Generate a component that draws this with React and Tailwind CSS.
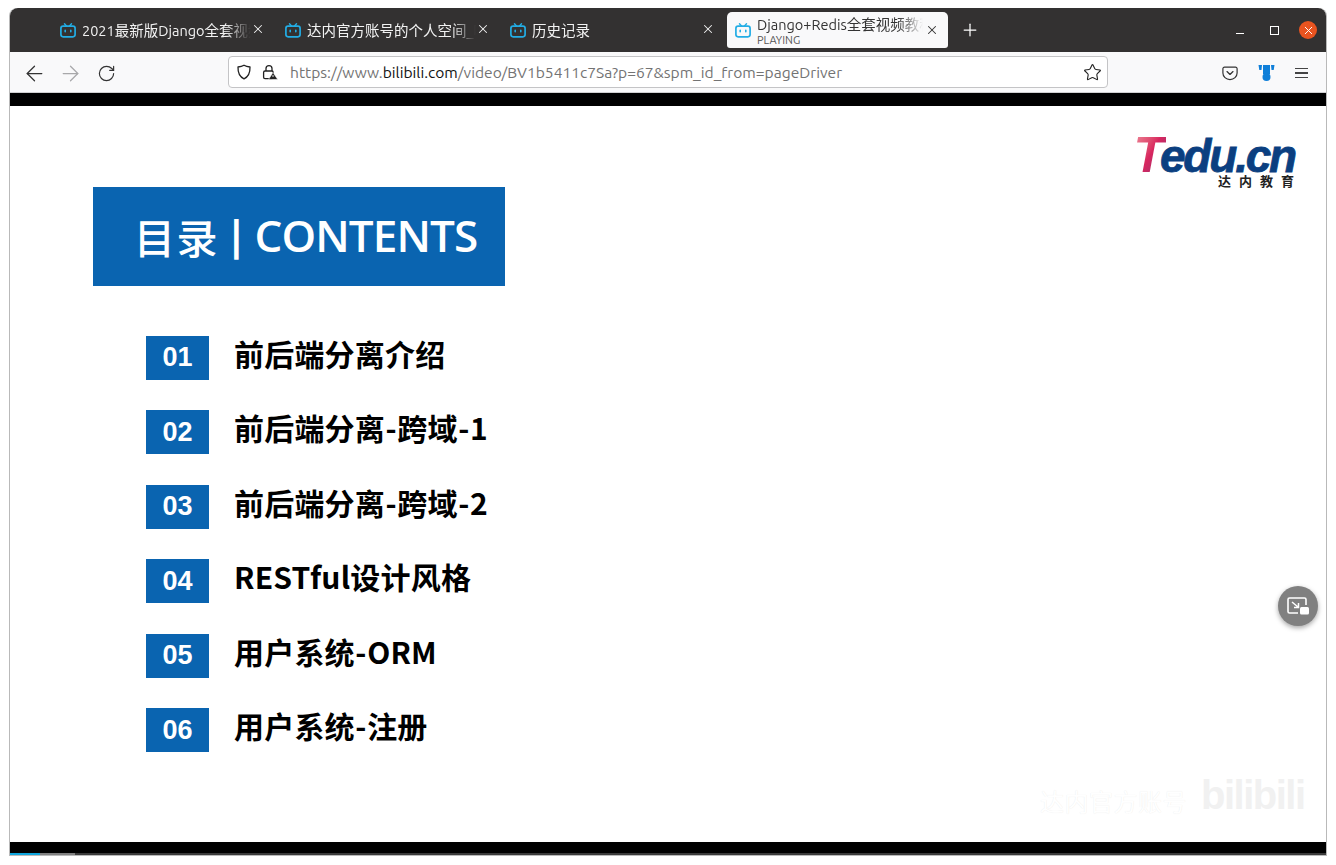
import React from 'react';
import { ArrowLeft, ArrowRight, RotateCw, Star, Plus, X } from 'lucide-react';

const CJK = "font-['Ubuntu','Noto_Sans','Noto_Sans_CJK_SC',sans-serif]";

const BiliIcon = () => (
  <svg width="16" height="15" viewBox="0 0 16 15" fill="none" className="shrink-0">
    <path d="M4.5 0.8 L6.5 3 M11.5 0.8 L9.5 3" stroke="#23ade5" strokeWidth="1.4" strokeLinecap="round" />
    <rect x="0.9" y="3.2" width="14.2" height="10.6" rx="2.2" stroke="#23ade5" strokeWidth="1.7" />
    <path d="M5.2 7.2v1.6M10.8 7.2v1.6" stroke="#23ade5" strokeWidth="1.6" strokeLinecap="round" />
  </svg>
);

const tabs = [
  { title: '2021最新版Django全套视频教程', width: 'w-[225px]' },
  { title: '达内官方账号的个人空间_哔哩哔哩', width: 'w-[225px]' },
  { title: '历史记录', width: 'w-[225px]' },
];

const items = [
  { num: '01', label: '前后端分离介绍' },
  { num: '02', label: '前后端分离-跨域-1' },
  { num: '03', label: '前后端分离-跨域-2' },
  { num: '04', label: 'RESTful设计风格' },
  { num: '05', label: '用户系统-ORM' },
  { num: '06', label: '用户系统-注册' },
];

const TitleBar = () => (
  <div className={`flex h-[44px] items-stretch rounded-t-[8px] bg-[#333131] pl-[38px] ${CJK}`}>
    {tabs.map((tab) => (
      <div key={tab.title} className={`flex ${tab.width} items-center pl-[12px]`}>
        <BiliIcon />
        <span className="ml-[6px] w-[169px] overflow-hidden whitespace-nowrap pt-[2px] text-[14.5px] text-[#f2f2f2] [mask-image:linear-gradient(to_right,black_85%,transparent)]">
          {tab.title}
        </span>
        <X size={14} strokeWidth={1.8} className="-translate-y-px text-[#f2f2f2]" />
      </div>
    ))}
    <div className="ml-[4px] mt-[4px] flex h-[36px] w-[221px] items-center rounded-t-[5px] rounded-b-[3px] bg-[#f9f9fa] pl-[8px]">
      <BiliIcon />
      <div className="ml-[6px] w-[166px] leading-none">
        <div className="overflow-hidden whitespace-nowrap text-[14.5px] leading-[19px] text-[#333] [mask-image:linear-gradient(to_right,black_85%,transparent)]">
          Django+Redis全套视频教程
        </div>
        <div className="text-[11px] leading-[12px] text-[#555]">PLAYING</div>
      </div>
      <X size={14} strokeWidth={1.8} className="ml-[2px] text-[#333]" />
    </div>
    <div className="ml-[12px] flex items-center">
      <Plus size={20} strokeWidth={1.5} className="text-white" />
    </div>
    <div className="ml-auto flex items-center pr-[9px]">
      <div className="mt-[7px] h-px w-[8px] bg-white" />
      <div className="ml-[26px] h-[9px] w-[9px] border border-white" />
      <div className="ml-[20px] flex h-[18px] w-[18px] items-center justify-center rounded-full bg-[#e95420]">
        <X size={13} strokeWidth={1.8} className="text-white" />
      </div>
    </div>
  </div>
);

const Toolbar = () => (
  <div className={`flex h-[41px] items-center border-b border-[#cfcfd1] bg-[#f9f9fa] ${CJK}`}>
    <ArrowLeft size={25} strokeWidth={1.2} className="ml-[11.5px] translate-y-px text-[#333]" />
    <ArrowRight size={25} strokeWidth={1.2} className="ml-[11px] translate-y-px text-[#a8a8aa]" />
    <RotateCw size={19} strokeWidth={1.5} className="ml-[14px] translate-y-px text-[#333]" />
    <div className="ml-[112.5px] flex h-[32px] w-[880px] items-center rounded-[4px] border border-[#c4c4c6] bg-white">
      <svg width="16" height="16" viewBox="0 0 16 16" fill="none" className="ml-[7px]">
        <path d="M8 1.2 C10 2.4 12 2.8 14 3 C14.2 9 12 13 8 14.8 C4 13 1.8 9 2 3 C4 2.8 6 2.4 8 1.2Z" stroke="#222" strokeWidth="1.3" strokeLinejoin="round" />
      </svg>
      <svg width="16" height="16" viewBox="0 0 16 16" fill="none" className="ml-[10px]">
        <path d="M4 7V4.6a3 3 0 0 1 6 0V7" stroke="#222" strokeWidth="1.3" />
        <rect x="1.6" y="7" width="9.6" height="7.6" rx="1.4" stroke="#222" strokeWidth="1.3" />
        <path d="M11 8.4 L15.8 15.6 H6.4Z" fill="#222" stroke="#fff" strokeWidth="0.6" />
        <path d="M11 11v2" stroke="#fff" strokeWidth="0.9" />
      </svg>
      <div className="ml-[12px] flex-1 whitespace-nowrap pt-[1px] text-[15.6px] text-[#737373]">
        https://www.<span className="text-[#111]">bilibili.com</span>/video/BV1b5411c7Sa?p=67&amp;spm_id_from=pageDriver
      </div>
      <Star size={19} strokeWidth={1.4} className="mr-[5px] text-[#222]" />
    </div>
    <svg width="16" height="15" viewBox="0 0 16 15" fill="none" className="ml-[114px] translate-y-px">
      <path d="M2.5 1.2h11a1.6 1.6 0 0 1 1.6 1.6v4.2a7.1 6.6 0 0 1-14.2 0V2.800a1.600 1.600 0 0 1 1.600-1.600Z" stroke="#333" strokeWidth="1.2" />
      <path d="M5 5.600l3 2.800 3-2.800" stroke="#333" strokeWidth="1.300" strokeLinecap="round" strokeLinejoin="round" />
    </svg>
    <svg width="17" height="18" viewBox="0 0 17 18" className="ml-[20px] translate-y-px">
      <path d="M0.500 1h3.500l-0.500 5h-2.200zM13 1h3.500l-0.800 5h-2.200zM5 1h7v9h-7z" fill="#0f7fd9" />
      <circle cx="8.500" cy="13" r="4" fill="#0f7fd9" />
    </svg>
    <div className="ml-[20px] flex w-[13px] translate-y-px flex-col gap-[3px]">
      <div className="h-[1.500px] bg-[#444]" />
      <div className="h-[1.500px] bg-[#444]" />
      <div className="h-[1.500px] bg-[#444]" />
    </div>
  </div>
);

const Logo = () => (
  <div className="flex flex-col items-end pr-[31px]">
    <div className="whitespace-nowrap font-['Liberation_Sans',sans-serif] text-[46px] font-bold italic leading-[34px] tracking-[-2.200px] text-[#0b3f80] [-webkit-text-stroke:0.8px_#0b3f80]">
      <span className="-mr-[6px] bg-gradient-to-br from-[#ef8fa0] via-[#d8265f] to-[#7b2a72] bg-clip-text pr-[4px] text-[50px] text-transparent [-webkit-text-stroke:0]">T</span>edu.cn
    </div>
    <div className="-mr-[7px] mt-[1px] font-['Noto_Sans_CJK_SC',sans-serif] text-[13px] font-bold leading-[13px] tracking-[8px] text-[#222]">
      达内教育
    </div>
  </div>
);

// hyphens in the slide are wider than the fallback font draws them
const Label = ({ text }) => (
  <>
    {text.split('-').map((part, i) => (
      <React.Fragment key={part}>
        {i > 0 && <span className="mx-[0.500px]">-</span>}
        {part}
      </React.Fragment>
    ))}
  </>
);

const Slide = () => (
  <div className="relative h-[736px] bg-white font-['Noto_Sans_CJK_SC',sans-serif]">
    <div className="h-[81px] pt-[32px]">
      <Logo />
    </div>
    <div className="ml-[83px] flex h-[99px] w-[412px] items-center bg-[#0a64b0] pl-[41px] text-[41px] font-medium text-white">
      <span className="tracking-[1.500px]">目录</span>
      <span className="ml-[6px] -translate-y-[2px] font-['Open_Sans',sans-serif] font-bold">|</span>
      <span className="ml-[7px] -translate-y-[2px] font-['Open_Sans',sans-serif] text-[44px] font-semibold tracking-[-0.900px]">CONTENTS</span>
    </div>
    <div className="ml-[136px] mt-[49.500px] flex flex-col gap-[30.500px]">
      {items.map((item) => (
        <div key={item.num} className="flex h-[44px] items-center">
          <div className="flex h-[44px] w-[63px] items-center justify-center bg-[#0a64b0] font-['Liberation_Sans',sans-serif] text-[27px] font-bold text-white">
            {item.num}
          </div>
          <div className="ml-[25px] -translate-y-[5px] whitespace-nowrap text-[30px] font-bold leading-none tracking-[0.200px] text-black">
            <Label text={item.label} />
          </div>
        </div>
      ))}
    </div>

    {/* floating picture-in-picture button */}
    <div className="absolute left-[1268px] top-[480px] flex h-[40px] w-[40px] items-center justify-center rounded-full bg-[#808080] shadow-[0_2px_5px_rgba(0,0,0,0.35)]">
      <svg width="24" height="22" viewBox="0 0 24 22" fill="none">
        <path d="M12 18H3.500A1.500 1.500 0 0 1 2 16.500V4.500A1.500 1.500 0 0 1 3.500 3H18.500A1.500 1.500 0 0 1 20 4.500V10" stroke="#fff" strokeWidth="1.600" />
        <path d="M6 7l6 5M12.500 8v4.500H8" stroke="#fff" strokeWidth="1.500" />
        <rect x="14" y="12" width="9" height="7.500" rx="1.500" fill="#fff" />
      </svg>
    </div>

    {/* faint watermark */}
    <div className="absolute left-[1030px] top-[668px] flex items-end">
      <span className="text-[24px] leading-[30px] tracking-[0.500px] text-white [text-shadow:0_0_1px_#e8e8e8]">达内官方账号</span>
      <span className="ml-[14px] font-['Liberation_Sans',sans-serif] text-[40px] font-bold leading-[42px] tracking-[-1.500px] text-[#f1f1f1]">bilibili</span>
    </div>
  </div>
);

export default function App() {
  return (
    <div className="h-[865px] w-[1336px] overflow-hidden bg-white pl-[9px] pr-[9px] pt-[8px]">
      <div className="flex h-[848px] w-[1318px] flex-col rounded-t-[8px] border-x border-b border-[#b9b9b9] bg-white">
        <TitleBar />
        <Toolbar />
        <div className="h-[13px] bg-black" />
        <Slide />
        <div className="h-[11px] bg-black" />
        <div className="flex h-[2px] bg-[#3a3a3a]">
          <div className="w-[30px] bg-[#0fa5dc]" />
          <div className="w-[35px] bg-[#808080]" />
        </div>
      </div>
    </div>
  );
}
